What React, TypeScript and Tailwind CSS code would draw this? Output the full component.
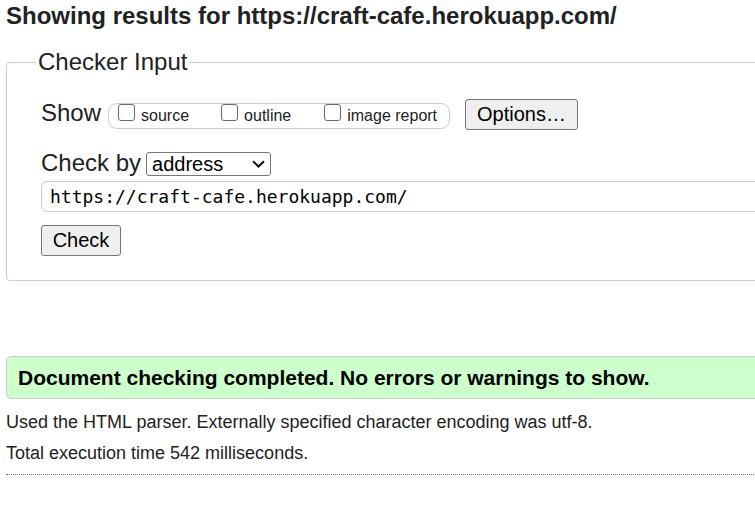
import { useState } from "react"

const checks = [
  { id: "source", label: "source", gap: "" },
  { id: "outline", label: "outline", gap: "ml-[32px]" },
  { id: "imgs", label: "image report", gap: "ml-[33px]" },
]

export default function App() {
  const [url, setUrl] = useState("https://craft-cafe.herokuapp.com/")
  const [by, setBy] = useState("address")

  return (
    <div className="h-[531px] w-[755px] overflow-hidden bg-white font-['Liberation_Sans',Arial,sans-serif] text-[#222]">
      <div className="w-[1100px] pl-[6px]">
        <h2 className="mt-[2px] text-[24px] leading-[28px] font-bold">
          Showing results for https://craft-cafe.herokuapp.com/
        </h2>

        <fieldset className="mt-[18px] rounded-[4px] border border-[#ccc] pb-[24px]">
          <legend className="ml-[29px] px-[2px] text-[24px] leading-[28px]">Checker Input</legend>

          <div className="pl-[34px]">
            {/* Show options */}
            <div className="mt-[23px] flex items-baseline">
              <span className="text-[24px] leading-[28px]">Show</span>
              <div className="ml-[7px] flex h-[26px] items-baseline rounded-[9px] border border-[#ccc] pr-[12px] pl-[9px] text-[16px] leading-[24px]">
                {checks.map((c) => (
                  <label key={c.id} className={`flex items-baseline ${c.gap}`}>
                    <input
                      type="checkbox"
                      name={c.id}
                      className="m-0 h-[17px] w-[17px] appearance-none rounded-[3px] border border-[#6b6b6b] bg-white"
                    />
                    <span className="ml-[6px]">{c.label}</span>
                  </label>
                ))}
              </div>
              <button
                type="button"
                className="ml-[15px] h-[31px] rounded-[3px] border border-[#767676] bg-[#efefef] px-[11px] text-[20px] leading-[29px] text-black"
              >
                Options…
              </button>
            </div>

            {/* Check by */}
            <div className="mt-[19px] flex items-baseline">
              <span className="text-[24px] leading-[28px]">Check by</span>
              <div className="relative ml-[5px]">
                <select
                  value={by}
                  onChange={(e) => setBy(e.target.value)}
                  className="h-[24px] w-[125px] appearance-none rounded-[3px] border border-[#767676] bg-white pl-[5px] text-[20px] leading-[22px] text-black"
                >
                  <option value="address">address</option>
                  <option value="file">file upload</option>
                  <option value="text">text input</option>
                </select>
                <svg
                  className="pointer-events-none absolute top-[8px] right-[6px]"
                  width="13"
                  height="8"
                  viewBox="0 0 13 8"
                  fill="none"
                >
                  <path d="M1 1.2 L6.5 6.5 L12 1.2" stroke="#111" strokeWidth="2" />
                </svg>
              </div>
            </div>

            <input
              type="url"
              value={url}
              onChange={(e) => setUrl(e.target.value)}
              className="mt-[3px] block h-[31px] w-[900px] rounded-[6px] border border-[#ccc] pl-[8px] font-['DejaVu_Sans_Mono',monospace] text-[18px] text-black outline-none"
            />

            <button
              type="submit"
              className="mt-[13px] block h-[31px] w-[80px] rounded-[3px] border border-[#767676] bg-[#efefef] text-[20px] leading-[29px] text-black"
            >
              Check
            </button>
          </div>
        </fieldset>

        <div className="mt-[75px] flex h-[43px] items-center rounded-[5px] border border-[#ccc] bg-[#ccffcc] pl-[11px] text-[21px] font-bold text-black">
          Document checking completed. No errors or warnings to show.
        </div>

        <p className="mt-[13px] text-[18px] leading-[21px]">
          Used the HTML parser. Externally specified character encoding was utf-8.
        </p>
        <p className="mt-[10px] text-[18px] leading-[21px]">Total execution time 542 milliseconds.</p>

        <hr className="mt-[10px] border-0 border-t border-dotted border-[#777]" />
      </div>
    </div>
  )
}
